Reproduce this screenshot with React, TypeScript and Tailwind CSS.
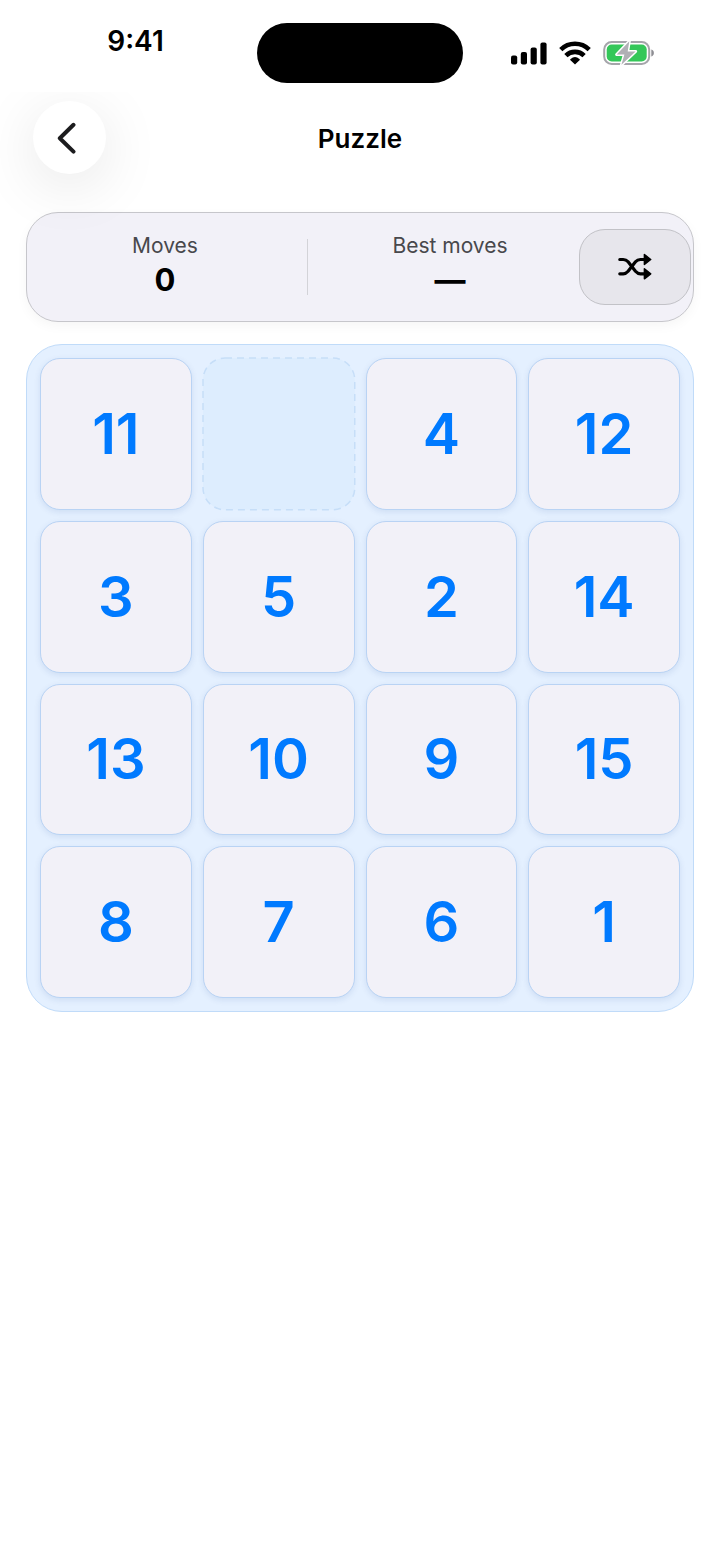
import React, { useState } from 'react';

const INITIAL_TILES = [11, 0, 4, 12, 3, 5, 2, 14, 13, 10, 9, 15, 8, 7, 6, 1];

const SignalIcon: React.FC = () => (
  <svg width="36" height="24" viewBox="0 0 36 24" fill="currentColor" aria-hidden="true">
    <rect x="0" y="14.5" width="6.2" height="9" rx="2" />
    <rect x="9.8" y="11" width="6.2" height="12.5" rx="2" />
    <rect x="19.6" y="6.5" width="6.2" height="17" rx="2" />
    <rect x="29.4" y="1.5" width="6.2" height="22" rx="2" />
  </svg>
);

const WifiIcon: React.FC = () => (
  <svg width="32" height="24" viewBox="0 0 32 24" aria-hidden="true">
    <g fill="none" stroke="currentColor" strokeWidth="4.6">
      <path d="M1.800 8.600a20.300 20.300 0 0 1 28.400 0" />
      <path d="M6.900 14.600a12.900 12.900 0 0 1 18.200 0" />
    </g>
    <path d="M16 23.600l-4.500-4.300c-.5-.5-.4-1 .1-1.400a7 7 0 0 1 8.800 0c.5.4.6.9.1 1.400z" fill="currentColor" />
  </svg>
);

const BatteryIcon: React.FC = () => (
  <svg width="52" height="26" viewBox="0 0 52 26" aria-hidden="true">
    <rect x="1.200" y="2" width="45" height="22" rx="7.500" fill="#fff" stroke="#a5a5aa" strokeWidth="2" />
    <rect x="3.700" y="4.500" width="40" height="17" rx="5" fill="#34c759" />
    <path d="M48.300 9.500c1.800.6 2.600 1.900 2.600 3.500s-.8 2.900-2.600 3.500z" fill="#8e8e93" />
    <path
      d="M26.300 1.200L13.700 14.600h7.700l-3 10.200L32.600 11.400h-7.900z"
      fill="#b0b0b5"
      stroke="#fff"
      strokeWidth="3"
      strokeLinejoin="round"
      paintOrder="stroke"
    />
  </svg>
);

const ShuffleIcon: React.FC = () => (
  <svg width="34" height="28" viewBox="0 0 34 28" aria-hidden="true">
    <g fill="none" stroke="currentColor" strokeWidth="3.200" strokeLinecap="round" strokeLinejoin="round">
      <path d="M1.800 6.500h3.400c2.200 0 3.500.7 4.900 2.300l7.400 9.400c1.400 1.600 2.700 2.600 4.900 2.600H26" />
      <path d="M1.800 20.800h3.400c2.200 0 3.500-1 4.900-2.600l7.400-9.400c1.400-1.600 2.700-2.300 4.900-2.300H26" />
    </g>
    <g fill="currentColor" stroke="currentColor" strokeWidth="1.500" strokeLinejoin="round">
      <path d="M26.400 1.500v10l6.300-5z" />
      <path d="M26.400 15.800v10l6.300-5z" />
    </g>
  </svg>
);

const StatusBar: React.FC = () => (
  <div className="grid h-[92px] grid-cols-[1fr_206px_1fr] pt-[23px]">
    <span className="pt-[2px] pl-[14px] text-center text-[28px] leading-[32px] font-semibold">9:41</span>
    <div className="h-[60px] rounded-[30px] bg-black" />
    <div className="flex h-[60px] items-center justify-center gap-[12px] pr-[18px]">
      <SignalIcon />
      <WifiIcon />
      <BatteryIcon />
    </div>
  </div>
);

interface StatProps {
  label: string;
  value: string;
}

const Stat: React.FC<StatProps> = ({ label, value }) => (
  <div className="flex flex-1 flex-col items-center">
    <span className="text-[21px] leading-[26px] text-[#48484c]">{label}</span>
    <span className="text-[31px] leading-[42px] font-bold text-black">{value}</span>
  </div>
);

interface TileProps {
  value: number;
  onMove: () => void;
}

const Tile: React.FC<TileProps> = ({ value, onMove }) => {
  if (value === 0) {
    return (
      <div className="aspect-square">
        <svg width="100%" height="100%" className="overflow-visible" aria-hidden="true">
          <rect width="100%" height="100%" rx="22" fill="#ddedfe" stroke="#c6def8" strokeWidth="1.500" strokeDasharray="7 5" />
        </svg>
      </div>
    );
  }
  return (
    <button
      onClick={onMove}
      className="flex aspect-square items-center justify-center rounded-[20px] border border-[#b9d3f4] bg-[#f2f1f8] text-[56px] leading-[64px] font-semibold text-[#007aff] shadow-[0_2px_6px_rgba(0,60,140,0.10)]"
    >
      {value}
    </button>
  );
};

const App: React.FC = () => {
  const [tiles, setTiles] = useState(INITIAL_TILES);
  const [moves, setMoves] = useState(0);

  const moveTile = (index: number) => {
    const empty = tiles.indexOf(0);
    const rowGap = Math.abs(Math.floor(index / 4) - Math.floor(empty / 4));
    const colGap = Math.abs((index % 4) - (empty % 4));
    if (rowGap + colGap !== 1) return;
    const next = [...tiles];
    next[empty] = tiles[index];
    next[index] = 0;
    setTiles(next);
    setMoves(moves + 1);
  };

  const shuffle = () => {
    setTiles([...tiles].sort(() => Math.random() - 0.5));
    setMoves(0);
  };

  return (
    <div className="min-h-screen bg-white font-['Inter',sans-serif] text-black">
      <StatusBar />
      <main className="overflow-hidden px-[26px] pb-8">
        <header className="grid h-[120px] grid-cols-[1fr_auto_1fr] items-start px-[7px] pt-[9px]">
          <button
            aria-label="Back"
            className="flex size-[73px] items-center justify-center rounded-full bg-white pr-[6px] text-[#1c1c1e] shadow-[0_12px_60px_rgba(0,0,0,0.10)]"
          >
            <svg width="20" height="34" viewBox="0 0 20 34" fill="none" aria-hidden="true">
              <path d="M16.500 3.800L2.800 17.200l13.700 13.400" stroke="currentColor" strokeWidth="4" strokeLinecap="round" strokeLinejoin="round" />
            </svg>
          </button>
          <h1 className="text-[26px] leading-[76px] font-semibold">Puzzle</h1>
        </header>

        <section className="flex h-[110px] items-center rounded-[32px] border border-[#c6c6cb] bg-[#f2f1f8] pr-[2px] pl-[9px] shadow-[0_4px_12px_rgba(0,0,0,0.04)]">
          <Stat label="Moves" value={String(moves)} />
          <div className="mx-[13px] h-[56px] w-px bg-[#d3d3d8]" />
          <Stat label="Best moves" value="—" />
          <button
            aria-label="Shuffle"
            onClick={shuffle}
            className="flex h-[76px] w-[112px] items-center justify-center rounded-[26px] border border-[#c2c2c7] bg-[#e7e6ec]"
          >
            <ShuffleIcon />
          </button>
        </section>

        <section className="mt-[22px] grid grid-cols-4 gap-[11px] rounded-[36px] border border-[#c0dbf9] bg-[#e4f0ff] p-[13px]">
          {tiles.map((value, index) => (
            <Tile key={value} value={value} onMove={() => moveTile(index)} />
          ))}
        </section>
      </main>
    </div>
  );
};

export default App;
